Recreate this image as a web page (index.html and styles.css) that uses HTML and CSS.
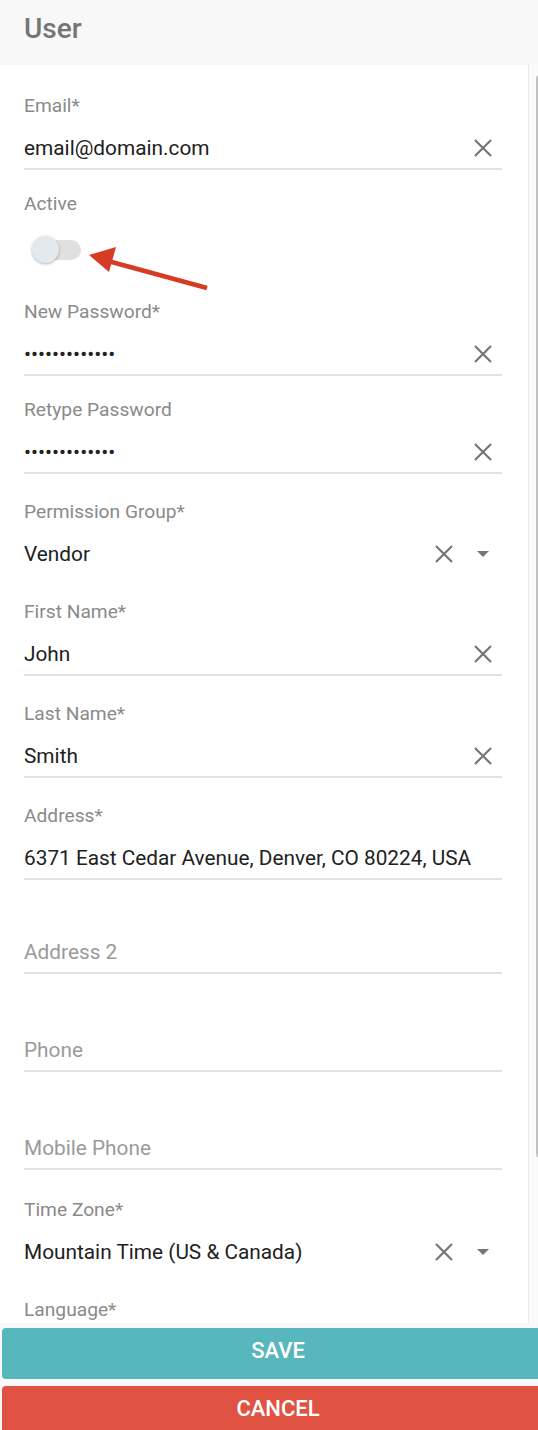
FILE: index.html
```html
<!DOCTYPE html>
<html lang="en">
<head>
  <meta charset="UTF-8" />
  <meta name="viewport" content="width=device-width, initial-scale=1.0" />
  <title>User</title>
  <link rel="stylesheet" href="styles.css">
</head>
<body>
  <div class="screen">
    <header class="title-bar">
      <h1>User</h1>
    </header>

    <div class="body-row">
      <form class="form" onsubmit="return false">
        <div class="field gap-s">
          <div class="label">Email*</div>
          <div class="control">
            <input type="text" value="email@domain.com" />
            <span class="clear"><svg viewBox="0 0 18 18"><path d="M1 1L17 17M17 1L1 17" /></svg></span>
          </div>
        </div>

        <div class="field field-toggle">
          <div class="label">Active</div>
          <div class="toggle"><span class="knob"></span></div>
        </div>

        <div class="field gap-s">
          <div class="label">New Password*</div>
          <div class="control">
            <span class="dots">•••••••••••••</span>
            <span class="clear"><svg viewBox="0 0 18 18"><path d="M1 1L17 17M17 1L1 17" /></svg></span>
          </div>
        </div>

        <div class="field gap-l">
          <div class="label">Retype Password</div>
          <div class="control">
            <span class="dots">•••••••••••••</span>
            <span class="clear"><svg viewBox="0 0 18 18"><path d="M1 1L17 17M17 1L1 17" /></svg></span>
          </div>
        </div>

        <div class="field">
          <div class="label">Permission Group*</div>
          <div class="control select">
            <input type="text" value="Vendor" />
            <span class="clear"><svg viewBox="0 0 18 18"><path d="M1 1L17 17M17 1L1 17" /></svg></span>
            <span class="caret"></span>
          </div>
        </div>

        <div class="field gap-l">
          <div class="label">First Name*</div>
          <div class="control">
            <input type="text" value="John" />
            <span class="clear"><svg viewBox="0 0 18 18"><path d="M1 1L17 17M17 1L1 17" /></svg></span>
          </div>
        </div>

        <div class="field gap-l">
          <div class="label">Last Name*</div>
          <div class="control">
            <input type="text" value="Smith" />
            <span class="clear"><svg viewBox="0 0 18 18"><path d="M1 1L17 17M17 1L1 17" /></svg></span>
          </div>
        </div>

        <div class="field gap-xs">
          <div class="label">Address*</div>
          <div class="control">
            <input type="text" value="6371 East Cedar Avenue, Denver, CO 80224, USA" />
          </div>
        </div>

        <div class="field empty gap-s">
          <div class="label">Address 2</div>
          <div class="control">
            <input type="text" placeholder="Address 2" />
          </div>
        </div>

        <div class="field empty gap-s">
          <div class="label">Phone</div>
          <div class="control">
            <input type="text" placeholder="Phone" />
          </div>
        </div>

        <div class="field empty gap-xl">
          <div class="label">Mobile Phone</div>
          <div class="control">
            <input type="text" placeholder="Mobile Phone" />
          </div>
        </div>

        <div class="field">
          <div class="label">Time Zone*</div>
          <div class="control select">
            <input type="text" value="Mountain Time (US &amp; Canada)" />
            <span class="clear"><svg viewBox="0 0 18 18"><path d="M1 1L17 17M17 1L1 17" /></svg></span>
            <span class="caret"></span>
          </div>
        </div>

        <div class="field">
          <div class="label">Language*</div>
          <div class="control select">
            <input type="text" value="English" />
            <span class="caret"></span>
          </div>
        </div>
      </form>

      <div class="scrollbar"><div class="thumb"></div></div>
    </div>

    <div class="actions">
      <button class="btn save">SAVE</button>
      <button class="btn cancel">CANCEL</button>
    </div>

    <!-- annotation pointing at the Active toggle -->
    <svg class="arrow" width="240" height="300" viewBox="0 0 240 300">
      <line x1="207" y1="288" x2="108" y2="261" />
      <polygon points="89,255 116,247 109,272" />
    </svg>
  </div>
</body>
</html>
```

FILE: styles.css
```css
html, body {
  margin: 0;
  padding: 0;
  overflow-x: hidden;
}
body {
  font-family: Roboto, "Liberation Sans", Arial, sans-serif;
  background: #f8f8f8;
}
.screen {
  position: relative;
  width: 556px;
}
.title-bar {
  height: 65px;
  box-sizing: border-box;
  padding: 11px 24px 0;
  background: #f8f8f8;
}
.title-bar h1 {
  margin: 0;
  font-size: 28px;
  line-height: 36px;
  font-weight: 500;
  color: #757575;
}
.body-row {
  display: flex;
  height: 1258px;
  overflow: hidden;
}
.form {
  width: 528px;
  box-sizing: border-box;
  padding: 29px 26px 0 24px;
  background: #fff;
}
.field {
  margin-bottom: 24px;
}
.field.gap-xs {
  margin-bottom: 18px;
}
.field.gap-s {
  margin-bottom: 22px;
}
.field.gap-l {
  margin-bottom: 26px;
}
.field.gap-xl {
  margin-bottom: 28px;
}
.label {
  height: 24px;
  font-size: 19.2px;
  line-height: 24px;
  color: #8a8a8a;
}
.control {
  display: flex;
  align-items: center;
  height: 40px;
  margin-top: 10px;
  border-bottom: 2px solid #e2e2e2;
}
.control.select {
  border-bottom-color: transparent;
}
.control input {
  flex: 1;
  min-width: 0;
  border: 0;
  outline: 0;
  padding: 0;
  background: transparent;
  font-family: inherit;
  font-size: 20.8px;
  color: #212121;
}
.control input::placeholder {
  color: #9a9a9a;
}
.dots {
  flex: 1;
  font-size: 20.8px;
  color: #212121;
}
.empty .label {
  visibility: hidden;
}
.clear {
  display: flex;
  width: 18px;
  height: 18px;
  margin-right: 10px;
}
.clear svg {
  width: 18px;
  height: 18px;
  stroke: #767676;
  stroke-width: 2.2;
  fill: none;
}
.select .clear {
  margin-right: 24px;
}
.caret {
  width: 0;
  height: 0;
  margin-right: 13px;
  border-left: 6px solid transparent;
  border-right: 6px solid transparent;
  border-top: 6px solid #767676;
}
.field-toggle {
  margin-bottom: 37px;
}
.toggle {
  position: relative;
  width: 50px;
  height: 27px;
  margin: 20px 0 0 8px;
}
.toggle::before {
  content: "";
  position: absolute;
  left: 3px;
  top: 3.5px;
  width: 46px;
  height: 20px;
  border-radius: 10px;
  background: #e0e0e0;
}
.knob {
  position: absolute;
  left: 0;
  top: 0;
  width: 27px;
  height: 27px;
  border-radius: 50%;
  background: #e4e9ee;
  box-shadow: 0 1px 3px rgba(0, 0, 0, 0.3);
}
.scrollbar {
  width: 15px;
  border-left: 1px solid #e8e8e8;
  background: #fafafa;
}
.thumb {
  width: 8px;
  height: 1083px;
  margin: 10px 0 0 7px;
  border-radius: 4px;
  background: #c1c1c1;
}
.actions {
  display: flex;
  flex-direction: column;
  gap: 7px;
  padding: 5px 0 0 2px;
}
.btn {
  display: flex;
  align-items: center;
  justify-content: center;
  width: 552px;
  height: 51px;
  padding: 0 0 7px;
  border: 0;
  border-radius: 4px;
  font-family: inherit;
  font-size: 22px;
  font-weight: 500;
  color: #fff;
}
.save {
  background: #58b6bd;
}
.cancel {
  background: #e05343;
}
.arrow {
  position: absolute;
  left: 0;
  top: 0;
  pointer-events: none;
}
.arrow line {
  stroke: #d63b24;
  stroke-width: 4.5;
}
.arrow polygon {
  fill: #d63b24;
}
```
